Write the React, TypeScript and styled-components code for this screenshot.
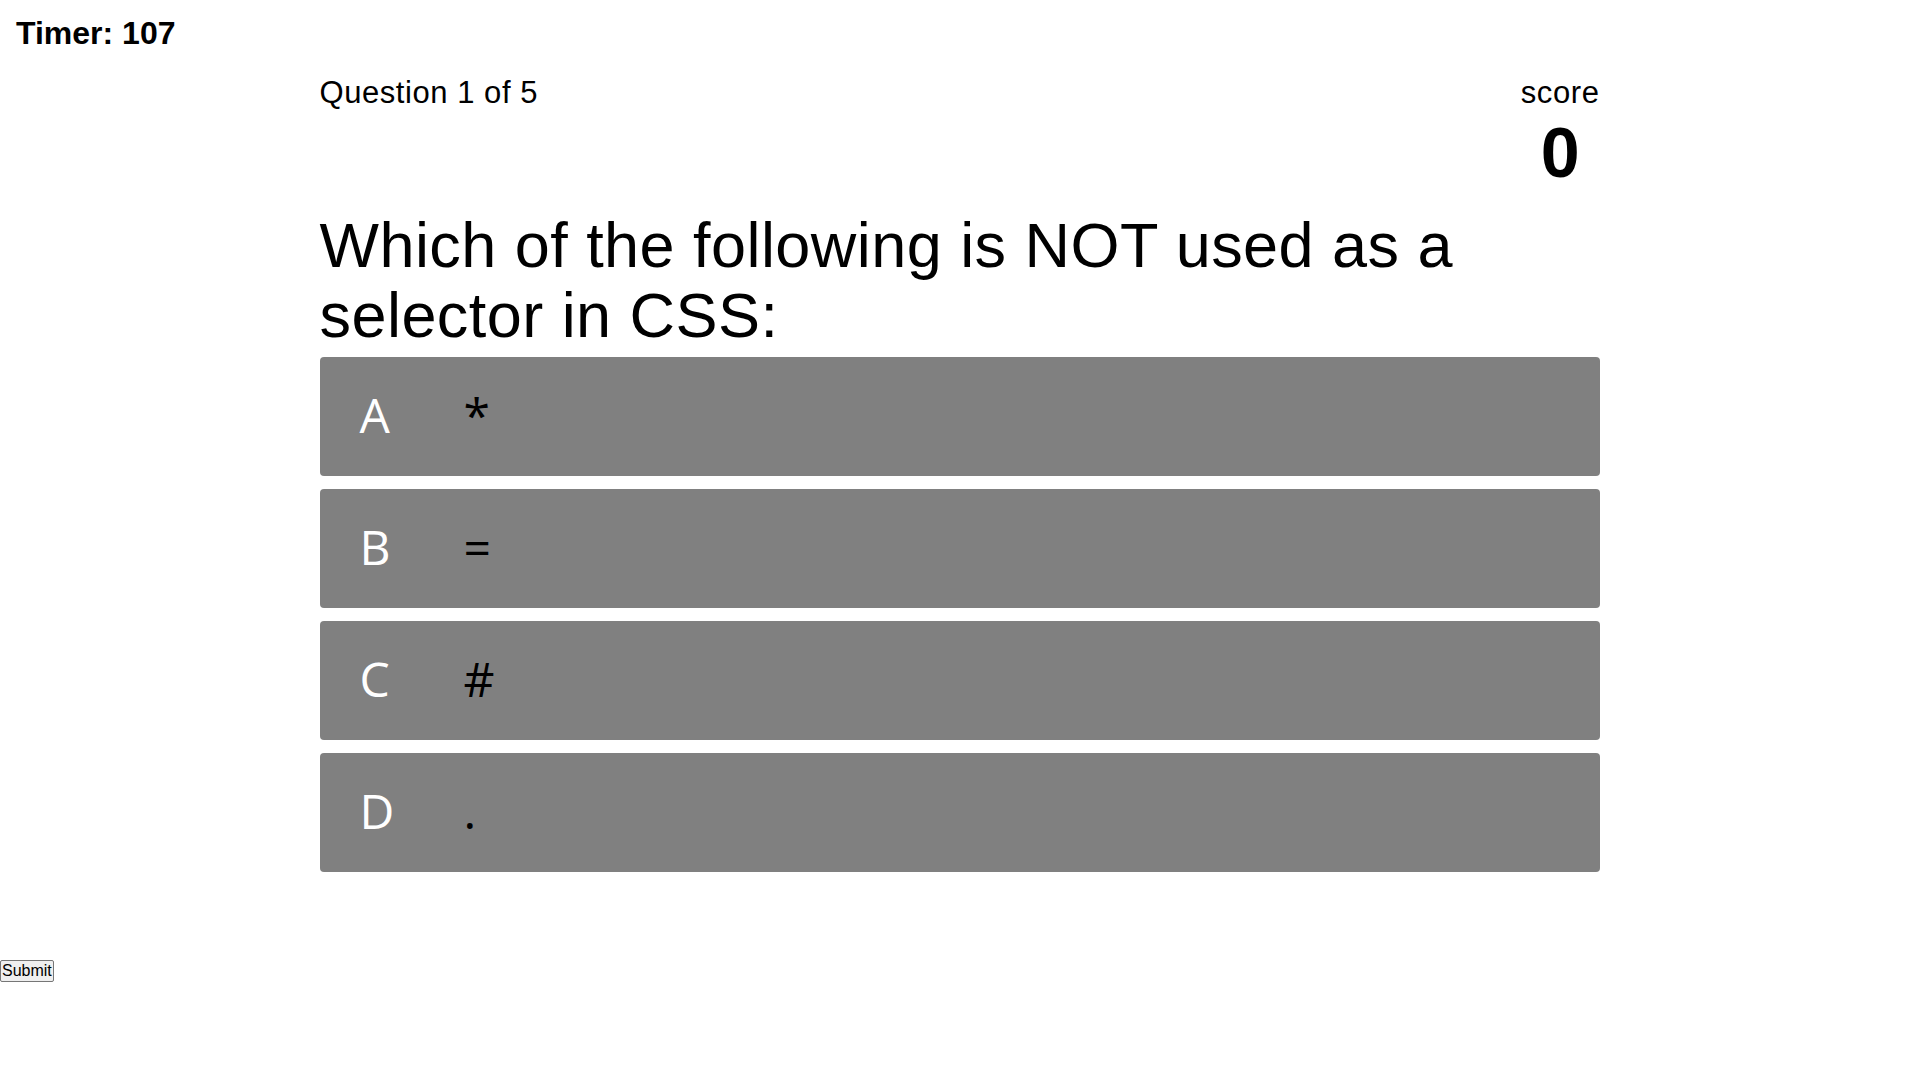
import React from "react";
import styled, { createGlobalStyle } from "styled-components";

const GlobalStyle = createGlobalStyle`
  html, body {
    margin: 0;
    padding: 0;
    background: #ffffff;
  }
  body {
    font-family: "Liberation Sans", Arial, sans-serif;
    color: #000000;
  }
  * {
    box-sizing: border-box;
  }
`;

const Page = styled.div`
  display: flex;
  flex-direction: column;
  min-height: 1079px;
`;

const TimerBar = styled.div`
  padding: 15px 16px 0;
  font-size: 32px;
  font-weight: 700;
  line-height: 36px;
`;

const Quiz = styled.main`
  width: 1280px;
  margin: 0 auto;
  padding-top: 24px;
  display: flex;
  flex-direction: column;
`;

const Header = styled.header`
  display: flex;
  justify-content: space-between;
  align-items: flex-start;
`;

const Progress = styled.div`
  font-size: 31px;
  letter-spacing: 0.55px;
  line-height: 36px;
`;

const ScoreBox = styled.div`
  display: flex;
  flex-direction: column;
  align-items: center;
`;

const ScoreLabel = styled.div`
  font-size: 31px;
  letter-spacing: 0.6px;
  line-height: 36px;
`;

const ScoreValue = styled.div`
  margin-top: 2px;
  font-size: 70px;
  font-weight: 700;
  line-height: 80px;
`;

const QuestionText = styled.h2`
  margin: 17px 0 7px;
  font-size: 63px;
  letter-spacing: 0.45px;
  font-weight: 400;
  line-height: 70px;
`;

const Answers = styled.div`
  display: flex;
  flex-direction: column;
  gap: 13px;
`;

const Answer = styled.div`
  display: flex;
  align-items: center;
  height: 119px;
  padding: 0 0 4px 40px;
  background: #808080;
  border-radius: 4px;
  font-family: "Open Sans", "Noto Sans", sans-serif;
  font-size: 48px;
  line-height: 66px;
  cursor: pointer;
`;

const Letter = styled.span`
  width: 104px;
  flex: none;
  color: #ffffff;
`;

const AnswerText = styled.span`
  color: #000000;
`;

const Footer = styled.footer`
  margin-top: 88px;
`;

const SubmitButton = styled.button`
  display: block;
  margin: 0;
  padding: 1px 1px;
  font-family: "Liberation Sans", Arial, sans-serif;
  font-size: 16px;
  line-height: 18px;
  color: #000000;
  background: #efefef;
  border: 1px solid #767676;
  border-radius: 2px;
`;

const answers = [
  { letter: "A", text: "*" },
  { letter: "B", text: "=" },
  { letter: "C", text: "#" },
  { letter: "D", text: "." },
];

export default function App() {
  return (
    <>
      <GlobalStyle />
      <Page>
        <TimerBar>Timer: 107</TimerBar>
        <Quiz>
          <Header>
            <Progress>Question 1 of 5</Progress>
            <ScoreBox>
              <ScoreLabel>score</ScoreLabel>
              <ScoreValue>0</ScoreValue>
            </ScoreBox>
          </Header>
          <QuestionText>
            Which of the following is NOT used as a selector in CSS:
          </QuestionText>
          <Answers>
            {answers.map((a) => (
              <Answer key={a.letter}>
                <Letter>{a.letter}</Letter>
                <AnswerText>{a.text}</AnswerText>
              </Answer>
            ))}
          </Answers>
        </Quiz>
        <Footer>
          <SubmitButton type="button">Submit</SubmitButton>
        </Footer>
      </Page>
    </>
  );
}
